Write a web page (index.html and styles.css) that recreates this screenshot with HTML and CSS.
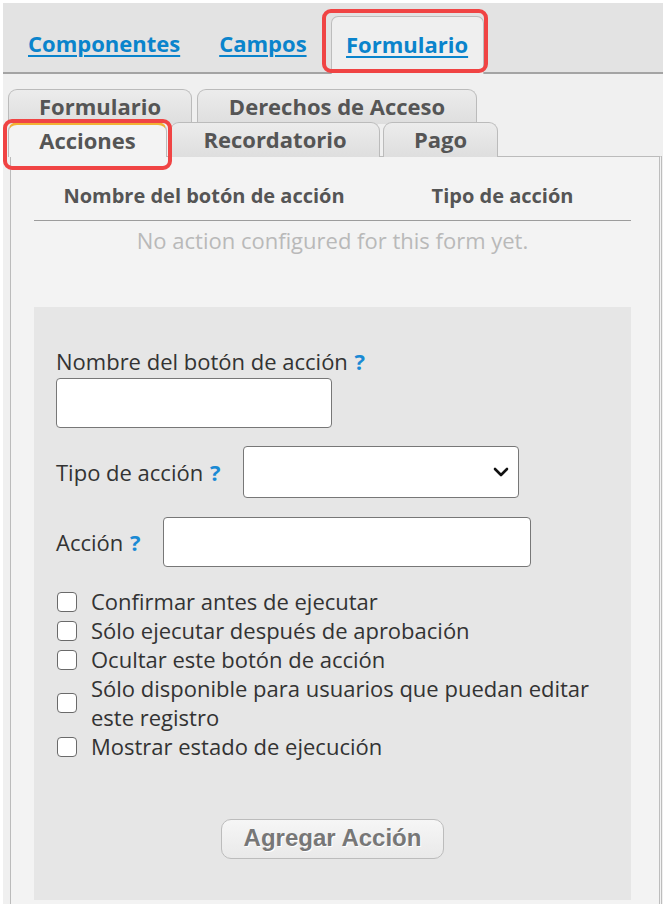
FILE: index.html
```html
<!DOCTYPE html>
<html lang="es">
<head>
<meta charset="utf-8">
<title>Acciones</title>
<link rel="stylesheet" href="styles.css">
</head>
<body>
<div class="page">
  <div class="topbar">
    <a class="toplink" href="#">Componentes</a>
    <a class="toplink" href="#">Campos</a>
    <div class="toptab-active"><a class="toplink" href="#">Formulario</a></div>
    <div class="mark mark-top"></div>
  </div>
  <div class="content">
    <div class="subtabs">
      <div class="tabrow row1">
        <div class="tab w-form">Formulario</div>
        <div class="tab w-der">Derechos de Acceso</div>
      </div>
      <div class="tabrow row2">
        <div class="tab tab-active w-acc">Acciones</div>
        <div class="tab w-rec">Recordatorio</div>
        <div class="tab w-pago">Pago</div>
      </div>
      <div class="mark mark-sub"></div>
    </div>
    <div class="panel">
      <div class="thead">
        <div class="th th1">Nombre del botón de acción</div>
        <div class="th th2">Tipo de acción</div>
      </div>
      <div class="empty">No action configured for this form yet.</div>
      <div class="formbox">
        <div class="field-stack">
          <div class="label">Nombre del botón de acción <span class="help">?</span></div>
          <div class="input input-name"></div>
        </div>
        <div class="field-row row-tipo">
          <div class="label">Tipo de acción <span class="help">?</span></div>
          <div class="input select">
            <svg width="16" height="12" viewBox="0 0 16 12"><path d="M2 3 L8 9 L14 3" fill="none" stroke="#111" stroke-width="2.6" stroke-linecap="round" stroke-linejoin="round"/></svg>
          </div>
        </div>
        <div class="field-row row-accion">
          <div class="label">Acción <span class="help">?</span></div>
          <div class="input input-accion"></div>
        </div>
        <ul class="checks">
          <li><span class="cb"></span><span class="cbl">Confirmar antes de ejecutar</span></li>
          <li><span class="cb"></span><span class="cbl">Sólo ejecutar después de aprobación</span></li>
          <li><span class="cb"></span><span class="cbl">Ocultar este botón de acción</span></li>
          <li><span class="cb"></span><span class="cbl">Sólo disponible para usuarios que puedan editar este registro</span></li>
          <li><span class="cb"></span><span class="cbl">Mostrar estado de ejecución</span></li>
        </ul>
        <div class="btnwrap"><button class="btn" type="button">Agregar Acción</button></div>
      </div>
    </div>
  </div>
</div>
</body>
</html>
```
FILE: styles.css
```css
* { box-sizing: border-box; }
html, body { margin: 0; padding: 0; background: #ffffff; }
body { font-family: "Open Sans", "Noto Sans", sans-serif; color: #333; }
.page { padding: 3px 2px 0 3px; width: 665px; height: 904px; overflow: hidden; }

.topbar {
  position: relative;
  height: 71px;
  background: #e3e3e3;
  border-bottom: 2px solid #a4a4a4;
  display: flex;
  align-items: flex-end;
  padding-left: 25px;
}
.toplink {
  font-weight: 700;
  font-size: 22px;
  color: #0a84cc;
  text-decoration: underline;
  text-decoration-thickness: 2px;
  text-underline-offset: 3px;
  margin-right: 39px;
  line-height: 28px;
  margin-bottom: 15px;
}
.toptab-active {
  margin-left: -15px;
  margin-bottom: -2px;
  width: 153px;
  height: 58px;
  background: #efefef;
  border: 1px solid #bdbdbd;
  border-bottom: none;
  border-radius: 7px 7px 0 0;
  display: flex;
  align-items: flex-end;
  justify-content: center;
}
.toptab-active .toplink { margin: 0 0 16px 0; }

.mark {
  position: absolute;
  border: 4px solid #f04444;
  border-radius: 9px;
}
.mark-top { left: 319px; top: 6px; width: 166px; height: 64px; }

.content { background: #f0f0f0; padding-top: 15px; }
.subtabs { position: relative; padding-left: 5px; }
.tabrow { display: flex; }
.row1 { gap: 5px; }
.row2 { gap: 3px; margin-top: -2px; position: relative; z-index: 2; }
.tab {
  height: 35px;
  border: 1px solid #bbbbbb;
  border-bottom: none;
  border-radius: 9px 9px 0 0;
  background: linear-gradient(#ececec, #dedede);
  font-weight: 700;
  font-size: 22px;
  color: #555;
  display: flex;
  align-items: center;
  justify-content: center;
  line-height: 1;
  padding-bottom: 2px;
}
.tab-active {
  background: #f3f3f3;
  border-top: 3px solid #f2b233;
  position: relative;
  z-index: 3;
  height: 35px;
  padding-bottom: 3px;
}
.w-form { width: 184px; }
.w-der { width: 280px; }
.w-acc { width: 159px; }
.w-rec { width: 210px; }
.w-pago { width: 115px; }
.mark-sub { left: 0px; top: 30px; width: 169px; height: 51px; z-index: 5; }

.panel {
  margin-left: 7px;
  width: 652px;
  margin-top: -1px;
  background: #f3f3f3;
  border: 1px solid #bbbbbb;
  border-right: 3px double #bdbdbd;
  padding: 18px 28px 0 23px;
  height: 760px;
}
.thead {
  display: flex;
  border-bottom: 1px solid #9c9c9c;
  height: 46px;
  align-items: center;
  padding-bottom: 4px;
}
.th { font-weight: 700; font-size: 20px; color: #555; text-align: center; }
.th1 { width: 340px; }
.th2 { flex: 1; padding-left: 0; }
.empty {
  text-align: center;
  font-size: 22px;
  color: #b9b9b9;
  margin-top: 6px;
  height: 26px;
  line-height: 26px;
}
.formbox {
  margin-top: 54px;
  background: #e6e6e6;
  padding: 40px 22px 41px 22px;
  font-size: 22px;
}
.label { color: #333; line-height: 28px; }
.help { color: #1a8ad4; font-weight: 700; margin-left: 1px; }
.input {
  background: #fff;
  border: 1px solid #777;
  border-radius: 4px;
  height: 50px;
}
.input-name { width: 276px; margin-top: 3px; }
.field-row { display: flex; align-items: center; }
.row-tipo { margin-top: 18px; }
.row-tipo .label { width: 187px; }
.select { width: 276px; height: 52px; display: flex; align-items: center; justify-content: flex-end; padding-right: 9px; }
.row-accion { margin-top: 19px; }
.row-accion .label { width: 107px; }
.input-accion { width: 368px; }

.checks { list-style: none; margin: 20px 0 0 0; padding: 0; }
.checks li { display: flex; align-items: center; line-height: 29px; }
.cb {
  flex: none;
  width: 20px;
  height: 20px;
  border: 1.5px solid #6a6a6a;
  border-radius: 4px;
  background: #fff;
  margin: 0 14px 0 1px;
}
.cbl { color: #333; }
.btnwrap { display: flex; justify-content: center; margin-top: 58px; }
.btn {
  width: 223px;
  height: 40px;
  border: 1px solid #bcbcbc;
  border-radius: 10px;
  background: linear-gradient(#f6f6f6, #e9e9e9);
  font-family: "Liberation Sans", Arial, sans-serif;
  font-weight: 700;
  font-size: 24px;
  color: #777;
  text-shadow: 1px 1px 0 #fff;
  padding: 0 0 2px 0;
}
```
